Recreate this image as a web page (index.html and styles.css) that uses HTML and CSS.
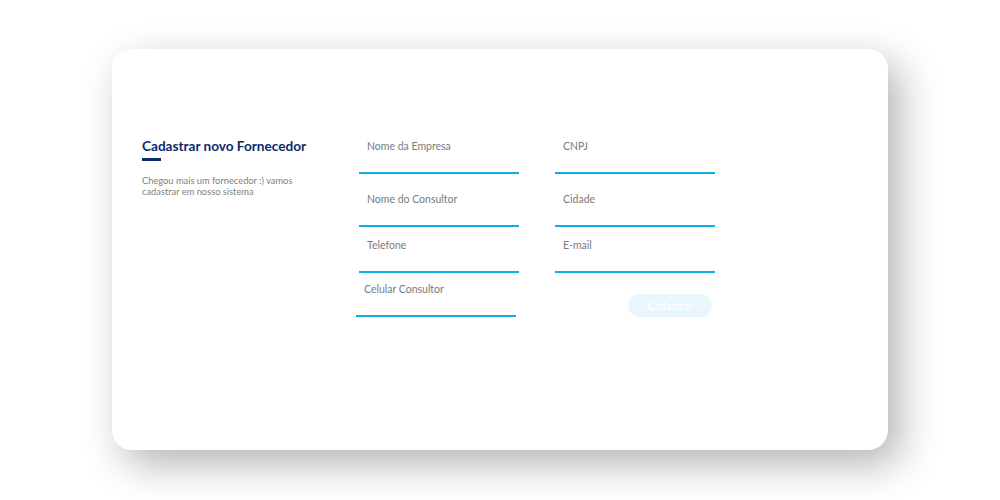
FILE: index.html
```html
<!DOCTYPE html>
<html lang="pt">
<head>
<meta charset="utf-8">
<title>Cadastrar novo Fornecedor</title>
<link rel="stylesheet" href="styles.css">
</head>
<body>
<div class="card">
  <div class="intro">
    <h1 class="title">Cadastrar novo Fornecedor</h1>
    <div class="title-bar"></div>
    <p class="desc">Chegou mais um fornecedor :) vamos cadastrar em nosso sistema</p>
  </div>
  <form class="form">
    <div class="field r1"><span class="label">Nome da Empresa</span></div>
    <div class="field r1"><span class="label">CNPJ</span></div>
    <div class="field r2"><span class="label">Nome do Consultor</span></div>
    <div class="field r2"><span class="label">Cidade</span></div>
    <div class="field r3"><span class="label">Telefone</span></div>
    <div class="field r3"><span class="label">E-mail</span></div>
    <div class="field r4 shift"><span class="label">Celular Consultor</span></div>
    <div class="actions r4"><button type="button" class="btn">Cadastrar</button></div>
  </form>
</div>
</body>
</html>
```
FILE: styles.css
```css
html, body {
  margin: 0;
  padding: 0;
  background: #ffffff;
}
body {
  min-height: 500px;
  box-sizing: border-box;
  padding: 49px 0 50px 112px;
  font-family: Lato, "Noto Sans", sans-serif;
}
.card {
  width: 776px;
  height: 401px;
  box-sizing: border-box;
  background: #fff;
  border-radius: 20px;
  box-shadow: 12px 14px 40px rgba(0, 0, 0, 0.3);
  display: flex;
  padding: 89px 0 0 30px;
}
.intro {
  width: 217px;
}
.title {
  margin: 0;
  font-size: 13.6px;
  line-height: 16px;
  font-weight: 700;
  color: #0b2a6b;
}
.title-bar {
  width: 19px;
  height: 3px;
  background: #0b2a6b;
  margin-top: 4px;
}
.desc {
  margin: 14px 0 0;
  width: 180px;
  font-size: 9.3px;
  line-height: 11px;
  color: #808080;
}
.form {
  display: grid;
  grid-template-columns: 160px 160px;
  column-gap: 36px;
  align-content: start;
  width: 356px;
  margin-top: 1px;
}
.field {
  box-sizing: border-box;
  height: 35px;
  border-bottom: 2px solid #0aaeea;
  padding: 0 0 0 8px;
}
.label {
  display: block;
  font-size: 10.5px;
  line-height: 14px;
  color: #7a7a7a;
}
.r1 { margin-top: 0; }
.r2 { margin-top: 18px; }
.r3 { margin-top: 11px; }
.r4 { margin-top: 9px; }
.shift {
  margin-left: -3px;
  margin-right: 3px;
}
.actions {
  display: flex;
  justify-content: flex-end;
  padding: 12px 3px 0 0;
}
.btn {
  width: 84px;
  height: 23px;
  border: none;
  border-radius: 12px;
  background: #eaf6fd;
  color: #ffffff;
  font-family: Lato, "Noto Sans", sans-serif;
  font-size: 10.5px;
  padding: 0;
}
```
